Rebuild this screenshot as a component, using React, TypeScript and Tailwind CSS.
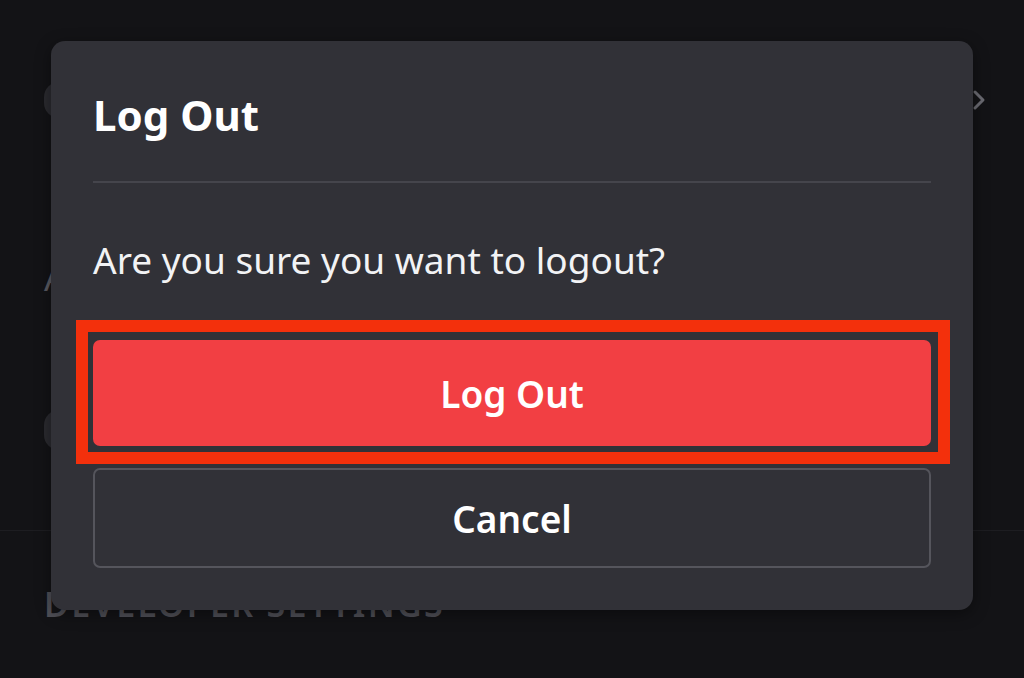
import React from "react";

export default function App() {
  return (
    <div className="relative w-[1024px] h-[678px] overflow-hidden bg-[#131316] font-['Noto_Sans',_sans-serif]">
      {/* Background settings page (mostly covered) */}
      <div className="flex flex-col pl-[44px] pr-[38px]">
        <div className="flex h-[200px] items-center justify-between">
          <div className="h-[36px] w-[30px] rounded-full bg-[#2a2a2f]" />
          <svg width="14" height="22" viewBox="0 0 14 22" className="text-[#6b6b72]">
            <path d="M3 3l8 8-8 8" fill="none" stroke="currentColor" strokeWidth="3" strokeLinecap="round" strokeLinejoin="round" />
          </svg>
        </div>
        <div className="h-[130px] pt-[60px] text-[36px] leading-none text-[#5a5a61]">Account</div>
        <div className="flex h-[200px] items-center">
          <div className="h-[40px] w-[30px] rounded-full bg-[#2a2a2f]" />
        </div>
        <div className="-mx-[44px] h-px bg-[#1d1d21]" />
        <div className="pt-[56px] text-[34px] font-semibold leading-none tracking-[2.3px] text-[#4f4f56]">DEVELOPER SETTINGS</div>
      </div>

      {/* Modal */}
      <div className="absolute left-[51px] top-[41px] flex w-[922px] flex-col rounded-[14px] bg-[#313137] px-[42px] shadow-[0_4px_16px_rgba(0,0,0,0.4)]">
        <div className="flex h-[140px] items-center pt-[8px] text-[42px] font-bold leading-none text-white">Log Out</div>
        <div className="h-[2px] bg-[#45454c]" />
        <div className="flex h-[157px] items-center pb-[4px] text-[37px] leading-none text-[#f2f3f5]">Are you sure you want to logout?</div>
        <div className="relative">
          <div className="flex h-[106px] items-center justify-center rounded-[7px] bg-[#f23f43] text-[37px] font-semibold leading-none text-white">Log Out</div>
          <div className="pointer-events-none absolute -bottom-[18px] -left-[17px] -right-[19px] -top-[20px] border-[12px] border-[#f3300c]" />
        </div>
        <div className="mt-[22px] flex h-[100px] items-center justify-center rounded-[7px] border-[2px] border-[#55555c] text-[37px] font-semibold leading-none text-white">Cancel</div>
        <div className="h-[42px]" />
      </div>
    </div>
  );
}
